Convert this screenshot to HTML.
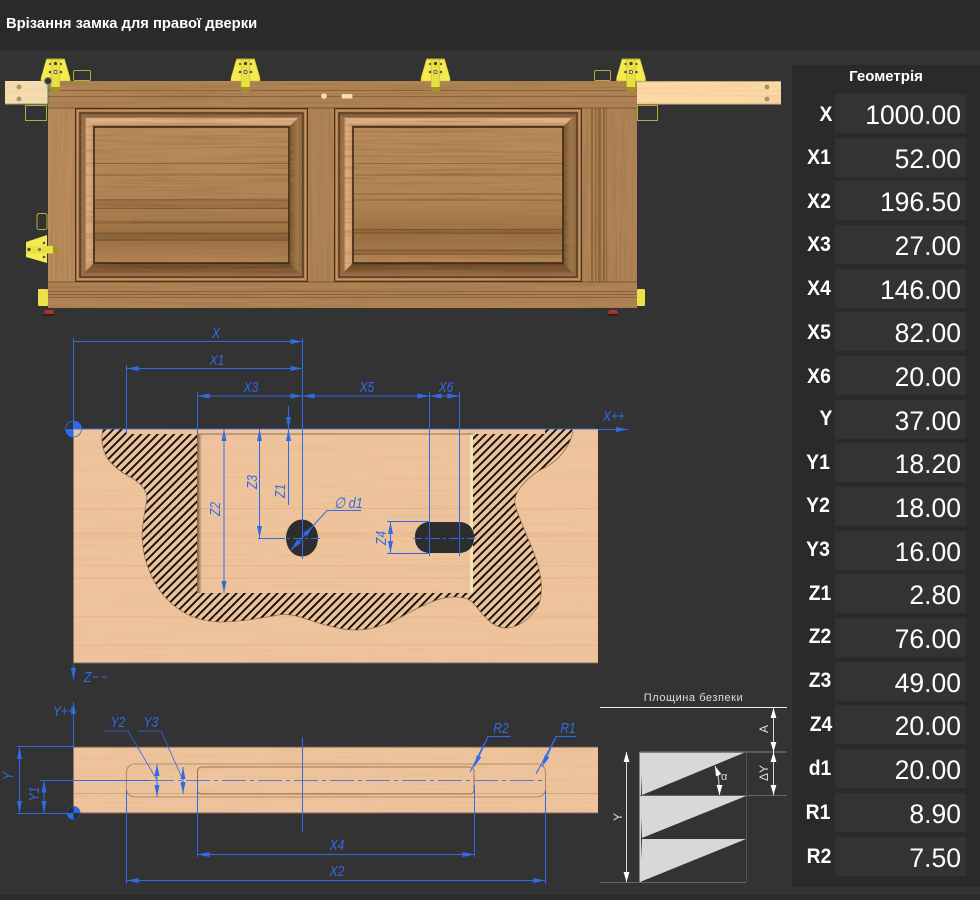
<!DOCTYPE html>
<html lang="uk">
<head>
<meta charset="utf-8">
<title>Врізання замка для правої дверки</title>
<style>
html,body{margin:0;padding:0;background:#333;}
body{width:980px;height:900px;position:relative;overflow:hidden;font-family:"Liberation Sans",sans-serif;color:#fff;}
.hd{position:absolute;left:0;top:0;width:980px;height:50px;background:#2a2a2a;}
.hd b{position:absolute;left:6px;top:15px;font-size:14.75px;line-height:18px;white-space:nowrap;}
.ft{position:absolute;left:0;top:895px;width:980px;height:5px;background:#2a2a2a;}
.pn{position:absolute;left:792px;top:65px;width:188px;height:822px;background:#2a2a2a;}
.pn h4{position:absolute;left:0;top:3px;width:188px;margin:0;text-align:center;font-size:15px;line-height:18px;}
svg{position:absolute;left:0;top:0;}
.l{position:absolute;width:60px;text-align:center;font-weight:bold;font-size:21px;line-height:24px;transform:scaleX(.92);}
.v{position:absolute;left:43px;width:126px;height:39px;padding-right:5px;background:#333;text-align:right;font-size:26.5px;line-height:42px;color:#fff;}
.d{font:italic 15px "Liberation Sans",sans-serif;fill:#2f6be8;}
.g{font:11px "Liberation Sans",sans-serif;fill:#ddd;}
</style>
</head>
<body>
<div class="hd"><b>Врізання замка для правої дверки</b></div>

<svg width="980" height="900" viewBox="0 0 980 900" xmlns="http://www.w3.org/2000/svg">
<defs>
<filter id="gh" x="0" y="0" width="100%" height="100%"><feTurbulence type="fractalNoise" baseFrequency="0.008 0.45" numOctaves="3" seed="4"/><feColorMatrix values="0 0 0 0 .33  0 0 0 0 .19  0 0 0 0 .07  2.4 0 0 0 -1.05"/></filter>
<filter id="gv" x="0" y="0" width="100%" height="100%"><feTurbulence type="fractalNoise" baseFrequency="0.45 0.008" numOctaves="3" seed="9"/><feColorMatrix values="0 0 0 0 .33  0 0 0 0 .19  0 0 0 0 .07  2.4 0 0 0 -1.05"/></filter>
<filter id="gl" x="0" y="0" width="100%" height="100%"><feTurbulence type="fractalNoise" baseFrequency="0.008 0.42" numOctaves="3" seed="12"/><feColorMatrix values="0 0 0 0 .8  0 0 0 0 .52  0 0 0 0 .3  2.4 0 0 0 -1"/></filter>
<pattern id="hat" width="5.8" height="9" patternUnits="userSpaceOnUse" patternTransform="rotate(45)">
<rect x="0" y="0" width="1.9" height="9" fill="#111"/>
</pattern>
<marker id="a" viewBox="0 0 12 5" refX="12" refY="2.5" markerWidth="12" markerHeight="5" markerUnits="userSpaceOnUse" orient="auto-start-reverse"><path d="M0 0L12 2.5L0 5z" fill="#2f6be8"/></marker>
<marker id="w" viewBox="0 0 12 7" refX="12" refY="3.5" markerWidth="10" markerHeight="6" markerUnits="userSpaceOnUse" orient="auto-start-reverse"><path d="M0 0L12 3.5L0 7z" fill="#fff"/></marker>
<linearGradient id="lb" x1="0" x2="1" y1="0" y2="0"><stop offset="0" stop-color="#8e6844"/><stop offset=".3" stop-color="#9c7248"/><stop offset=".45" stop-color="#e2b084"/><stop offset=".9" stop-color="#d29e70"/><stop offset="1" stop-color="#6e4a2a"/></linearGradient>
<linearGradient id="tb" x1="0" x2="0" y1="0" y2="1"><stop offset="0" stop-color="#7e5a38"/><stop offset=".25" stop-color="#8e6844"/><stop offset=".35" stop-color="#e6b68c"/><stop offset=".8" stop-color="#d8a678"/><stop offset="1" stop-color="#6e4a2a"/></linearGradient>
<linearGradient id="bb" x1="0" x2="0" y1="0" y2="1"><stop offset="0" stop-color="#664422"/><stop offset=".7" stop-color="#835b34"/><stop offset="1" stop-color="#a07648"/></linearGradient>
<linearGradient id="rb" x1="0" x2="1" y1="0" y2="0"><stop offset="0" stop-color="#70502c"/><stop offset=".6" stop-color="#a07648"/><stop offset="1" stop-color="#8e6642"/></linearGradient>
<linearGradient id="pd" x1="0" x2="0" y1="0" y2="1"><stop offset="0" stop-color="#ba8a5a"/><stop offset=".55" stop-color="#b38453"/><stop offset=".82" stop-color="#9a6c40"/><stop offset="1" stop-color="#b5865a"/></linearGradient>
<linearGradient id="sh" x1="0" x2="1" y1="0" y2="0"><stop offset="0" stop-color="#5a4028" stop-opacity=".8"/><stop offset="1" stop-color="#5a4028" stop-opacity="0"/></linearGradient>
<g id="hinge">
<path d="M-9 0H9L14.500 19V22H-14.500V19z" fill="#f5ea50" stroke="#c0b838" stroke-width=".5"/>
<rect x="-4.300" y="0" width="8.600" height="28" fill="#eadf42"/>
<rect x="-4.300" y="28" width="8.600" height="4.500" fill="#a09520"/>
<path d="M-4.300 0V28M4.300 0V28" stroke="#c8bd32" stroke-width=".6"/>
<circle cx="0" cy="4.500" r="1.600" fill="#3d3d30"/><circle cx="0" cy="13" r="1.600" fill="#e8e8e0" stroke="#333" stroke-width=".7"/>
<circle cx="-5.500" cy="13" r="1.300" fill="#55553c"/><circle cx="5.500" cy="13" r="1.300" fill="#55553c"/>
<circle cx="-5.500" cy="5" r="1.100" fill="#55553c"/><circle cx="5.500" cy="5" r="1.100" fill="#55553c"/>
<rect x="-9" y="-.6" width="18" height="1" fill="#a09a30"/>
</g>
</defs>

<!-- planks -->
<rect x="5" y="81" width="44" height="23" fill="#f5ddb0"/>
<rect x="5" y="81" width="44" height="23" filter="url(#gl)" opacity=".4"/>
<rect x="5" y="103.500" width="44" height="1" fill="#a89878"/>
<circle cx="19" cy="87" r="2.500" fill="#a49a68"/><circle cx="19" cy="99" r="2.500" fill="#a49a68"/>
<rect x="637" y="81" width="144" height="23.500" fill="#fcd8a2"/>
<rect x="637" y="81" width="144" height="23.500" filter="url(#gl)" opacity=".5"/>
<rect x="637" y="103.800" width="144" height="1" fill="#9c8868"/><rect x="637" y="81" width="144" height=".8" fill="#b09a78"/>
<circle cx="767" cy="87" r="2.400" fill="#9c9468"/><circle cx="767" cy="99" r="2.400" fill="#9c9468"/>

<!-- outlines -->
<g fill="none" stroke="#b5ae34" stroke-width="1">
<rect x="73.500" y="70.500" width="17" height="10" rx="1.500"/>
<rect x="594.500" y="70.500" width="16" height="10" rx="1.500"/>
<rect x="25.500" y="105.500" width="21" height="15"/>
<rect x="637.500" y="105.500" width="20" height="15"/>
<rect x="37" y="213.500" width="10" height="16" rx="2"/>
</g>

<!-- door -->
<rect x="48" y="81" width="589" height="227" fill="#b08254"/>
<rect x="48" y="81" width="589" height="27" filter="url(#gh)"/>
<rect x="48" y="282" width="589" height="26" filter="url(#gh)"/>
<g stroke="#6a4526" stroke-width="1" opacity=".5">
<path d="M48 96.500H637M48 90.500H637M48 294.500H637M48 297.500H637M48 291.500H637"/>
</g>
<rect x="48" y="108" width="27" height="174" fill="#b98a5a"/>
<rect x="48" y="108" width="27" height="174" filter="url(#gv)" opacity=".6"/>
<rect x="308" y="108" width="26" height="174" fill="#b08256"/>
<rect x="308" y="108" width="26" height="174" filter="url(#gv)"/>
<rect x="582" y="108" width="55" height="174" fill="#b08256"/>
<rect x="582" y="108" width="55" height="174" filter="url(#gv)"/>
<g fill="#6a4526" opacity=".45"><rect x="591" y="108" width="2" height="174"/><rect x="595" y="108" width="1.500" height="174"/><rect x="598" y="108" width="3" height="174"/><rect x="603" y="108" width="2" height="174"/><rect x="606" y="108" width="1" height="174"/></g>
<path d="M48 108H637M48 282H637" stroke="#7c5530" stroke-width="1"/>

<!-- panel 1 -->
<rect x="75.500" y="108.500" width="232" height="173" fill="#9a7046" stroke="#4e3319" stroke-width="1"/>
<rect x="77.800" y="110.800" width="227.400" height="168.400" fill="none" stroke="#cf9e70" stroke-width="1.200"/>
<rect x="80" y="113" width="223" height="164" fill="#8a6240" stroke="#4a2f16" stroke-width="1.200"/>
<polygon points="81,114 302,114 289,127 94,127" fill="url(#tb)"/>
<polygon points="81,114 94,127 94,263 81,276" fill="url(#lb)"/>
<polygon points="81,276 94,263 289,263 302,276" fill="url(#bb)"/>
<polygon points="302,114 289,127 289,263 302,276" fill="url(#rb)"/>
<rect x="81" y="114" width="221" height="162" filter="url(#gh)" opacity=".55"/>
<rect x="94" y="127" width="196" height="136" fill="url(#pd)"/>
<rect x="94" y="127" width="196" height="136" filter="url(#gh)"/>
<g fill="#5e3d1f" opacity=".22"><rect x="94" y="199" width="196" height="10"/><rect x="94" y="221" width="196" height="3"/><rect x="94" y="232" width="196" height="9"/></g>
<g stroke="#5e3d1f" opacity=".42"><path d="M94 163.500H290M94 175H290M94 200H290M94 208.500H290M130 222H290M94 233.500H290M94 240H290" fill="none"/></g>
<rect x="94" y="127" width="195" height="136" fill="none" stroke="#3a2410" stroke-width="1.500"/>

<!-- panel 2 -->
<rect x="334.500" y="108.500" width="247" height="173" fill="#9a7046" stroke="#4e3319" stroke-width="1"/>
<rect x="336.800" y="110.800" width="242.400" height="168.400" fill="none" stroke="#cf9e70" stroke-width="1.200"/>
<rect x="339" y="113" width="238" height="164" fill="#8a6240" stroke="#4a2f16" stroke-width="1.200"/>
<polygon points="340,114 576,114 563,127 353,127" fill="url(#tb)"/>
<polygon points="340,114 353,127 353,263 340,276" fill="url(#lb)"/>
<polygon points="340,276 353,263 563,263 576,276" fill="url(#bb)"/>
<polygon points="576,114 563,127 563,263 576,276" fill="url(#rb)"/>
<rect x="340" y="114" width="236" height="162" filter="url(#gh)" opacity=".55"/>
<rect x="353" y="127" width="210" height="136" fill="url(#pd)"/>
<rect x="353" y="127" width="210" height="136" filter="url(#gh)"/>
<g fill="#5e3d1f" opacity=".22"><rect x="353" y="229" width="210" height="5"/><rect x="353" y="249" width="210" height="6"/></g>
<g stroke="#5e3d1f" opacity=".42"><path d="M353 163.500H563M353 175H563M353 194H563M353 200H563M353 229.500H563M353 233H563M353 250.500H563M353 254H563" fill="none"/></g>
<rect x="353" y="127" width="210" height="136" fill="none" stroke="#3a2410" stroke-width="1.500"/>

<circle cx="324" cy="96" r="2.800" fill="#f3dfb0"/><rect x="341.500" y="94" width="11" height="4.500" rx="1.500" fill="#f3dfb0"/>
<path d="M48 81V105M48 81H72" stroke="#2f8a4a" stroke-width="1" fill="none"/>

<use href="#hinge" x="55.500" y="59"/>
<use href="#hinge" x="245.500" y="59"/>
<use href="#hinge" x="435.500" y="59"/>
<use href="#hinge" x="631" y="59"/>
<circle cx="48" cy="81" r="3.500" fill="#2a3a30" stroke="#888" stroke-width="1"/>
<path d="M47 235V263L26 257V242z" fill="#f5ea50"/>
<rect x="26" y="246" width="27" height="7.500" fill="#eadf42"/><rect x="53" y="246" width="5" height="7.500" fill="#a09520"/>
<circle cx="29" cy="249.500" r="1.600" fill="#444"/><circle cx="39.500" cy="249.500" r="1.600" fill="#778"/>
<circle cx="44" cy="243" r="1.300" fill="#555"/><circle cx="44" cy="257" r="1.300" fill="#555"/>
<rect x="38" y="289" width="10" height="17" rx="1" fill="#ede04a"/>
<rect x="637" y="289" width="8" height="17" rx="1" fill="#ede04a"/>
<path d="M45 310h8l1 4h-10z" fill="#a8323a"/><rect x="43" y="314" width="11" height="1.500" fill="#3a1010"/>
<path d="M609 310h8l1 4h-10z" fill="#a8323a"/><rect x="607" y="314" width="11" height="1.500" fill="#3a1010"/>

<!-- main wood -->
<rect x="73.500" y="429" width="524.500" height="234" fill="#efc39c"/>
<rect x="73.500" y="429" width="524.500" height="234" filter="url(#gl)" opacity=".8"/>
<g stroke="#cf9a60" stroke-width="1" opacity=".3"><path d="M74 508.500H598M74 533.500H598M74 536H598M74 566H598M74 578H598M74 617H598M74 645H598"/></g>
<rect x="73.500" y="662.500" width="524.500" height="1" fill="#7a6a58"/>
<rect x="197" y="434" width="5" height="159" fill="url(#sh)"/>
<rect x="470" y="434" width="3" height="159" fill="#f7e3b2"/>
<path d="M197 434H473" stroke="#8a7560" stroke-width="1"/>
<path d="M103 429C101 437 101 446 107 458C113 466 122 473 132 478C141 484 147 490 147 499C145 510 142 525 142 537C143 555 147 568 155 583C162 596 172 605 183 612C195 619 207 622 222 622C240 622 262 618 278 615C296 612 312 623 330 626C343 630 356 631 368 629C384 626 397 620 410 612C426 604 440 597 453 597C463 597 469 598 474 604C482 613 490 627 505 628C520 628 532 617 539 604C543 593 542 580 538 565C533 548 525 532 520 519C516 508 513 503 516 495C521 484 533 473 546 467C559 460 570 446 573 432L572 429H545L545 434H473V593H197V434H126V429z" fill="url(#hat)"/>
<path d="M103 429C101 437 101 446 107 458C113 466 122 473 132 478C141 484 147 490 147 499C145 510 142 525 142 537C143 555 147 568 155 583C162 596 172 605 183 612C195 619 207 622 222 622C240 622 262 618 278 615C296 612 312 623 330 626C343 630 356 631 368 629C384 626 397 620 410 612C426 604 440 597 453 597C463 597 469 598 474 604C482 613 490 627 505 628C520 628 532 617 539 604C543 593 542 580 538 565C533 548 525 532 520 519C516 508 513 503 516 495C521 484 533 473 546 467C559 460 570 446 573 432" fill="none" stroke="#8a6a48" stroke-width=".7"/>
<ellipse cx="302" cy="538" rx="16" ry="18.500" fill="#2d2d2d"/>
<rect x="415" y="522" width="59" height="31" rx="14" fill="#2d2d2d"/>

<!-- drawing dims top -->
<g stroke="#2f6be8" stroke-width="1" fill="none">
<path d="M73.500 338V429M126.500 365V434M197.500 392V434M302.500 338V559M429.500 392V556M459.500 392V556"/>
<path d="M73.500 341.500H302.500" marker-end="url(#a)"/>
<path d="M126.500 368.500H302.500" marker-start="url(#a)" marker-end="url(#a)"/>
<path d="M197.500 396H302.500" marker-start="url(#a)" marker-end="url(#a)"/>
<path d="M302.500 396H429.500" marker-start="url(#a)" marker-end="url(#a)"/>
<path d="M429.500 396H459.500" marker-start="url(#a)" marker-end="url(#a)"/>
<path d="M73.500 429H598" stroke-opacity=".8"/>
<path d="M598 429.500H628" marker-end="url(#a)"/>
<path d="M288.500 406V429" marker-end="url(#a)"/>
<path d="M288.500 505V429" marker-end="url(#a)"/>
<path d="M259.500 429V538" marker-start="url(#a)" marker-end="url(#a)"/>
<path d="M224 429V593" marker-start="url(#a)" marker-end="url(#a)"/>
<path d="M258 538.500H285"/>
<path d="M390.500 522V553" marker-start="url(#a)" marker-end="url(#a)"/>
<path d="M387 521.500H430M387 553.500H430"/>
<path d="M291 550L313 526" marker-start="url(#a)"/>
<path d="M291 550L313 526" marker-end="url(#a)"/>
<path d="M313 526L327 510.500H361"/>
<path d="M275 538.500H322M413 538.500H477" stroke-dasharray="9 3 3 3"/>
</g>
<text class="d" transform="translate(216,338) scale(.8,1)" text-anchor="middle">X</text>
<text class="d" transform="translate(217,365) scale(.8,1)" text-anchor="middle">X1</text>
<text class="d" transform="translate(251,392) scale(.8,1)" text-anchor="middle">X3</text>
<text class="d" transform="translate(367,392) scale(.8,1)" text-anchor="middle">X5</text>
<text class="d" transform="translate(446,392) scale(.8,1)" text-anchor="middle">X6</text>
<text class="d" transform="translate(603,421) scale(.8,1)">X++</text>
<text class="d" transform="translate(285,491) rotate(-90) scale(.8,1)" text-anchor="middle">Z1</text>
<text class="d" transform="translate(257,482) rotate(-90) scale(.8,1)" text-anchor="middle">Z3</text>
<text class="d" transform="translate(220,509) rotate(-90) scale(.8,1)" text-anchor="middle">Z2</text>
<text class="d" transform="translate(386,538) rotate(-90) scale(.8,1)" text-anchor="middle">Z4</text>
<text class="d" transform="translate(334,508) scale(.85,1)">∅ d1</text>
<circle cx="73.500" cy="429" r="8" fill="none" stroke="#2f6be8" stroke-width=".8"/>
<path d="M73.500 421A8 8 0 0 1 81.500 429H73.500zM73.500 429H65.500A8 8 0 0 0 73.500 437z" fill="#2f6be8"/>

<!-- bottom view -->
<rect x="73.500" y="747" width="524.500" height="66" fill="#efc39c"/>
<rect x="73.500" y="747" width="524.500" height="66" filter="url(#gl)" opacity=".85"/>
<path d="M74 793.500H598" stroke="#a8784a" stroke-width="1" opacity=".4"/>
<path d="M73.500 747H598" stroke="#6a5a48" stroke-width="1"/>
<path d="M73.500 813H598" stroke="#7a6a58" stroke-width="1"/>
<rect x="126.500" y="764" width="419" height="33" rx="8" fill="none" stroke="#9a7e64" stroke-width=".8"/>
<rect x="197.500" y="767" width="276.500" height="27" rx="4" fill="none" stroke="#7e6248" stroke-width=".8"/>
<g stroke="#2f6be8" stroke-width="1" fill="none">
<path d="M73.500 680V665" marker-start="url(#a)"/>
<path d="M73.500 747V702" marker-end="url(#a)"/>
<path d="M17 746.500H73.500M17 813.500H73.500M40 780.500H150"/>
<path d="M19.500 747V813" marker-start="url(#a)" marker-end="url(#a)"/>
<path d="M44 780.500V813" marker-start="url(#a)" marker-end="url(#a)"/>
<path d="M150 780.500H545" stroke-dasharray="24 4 4 4" stroke-opacity=".8"/>
<path d="M157 764V797" marker-start="url(#a)" marker-end="url(#a)"/>
<path d="M183 767V794" marker-start="url(#a)" marker-end="url(#a)"/>
<path d="M104 731H128L157 780M138 731H161L183 780" stroke-width=".8"/>
<path d="M302.500 737V832"/>
<path d="M197.500 780V857M474.500 785V857M126.500 790V884M545.500 790V884"/>
<path d="M197.500 854.500H474.500" marker-start="url(#a)" marker-end="url(#a)"/>
<path d="M126.500 880.500H545.500" marker-start="url(#a)" marker-end="url(#a)"/>
<path d="M511 736.500H488L470 772M576 736.500H556L536 774"/>
<path d="M488 737L474 767" marker-end="url(#a)"/>
<path d="M556 737L542 767" marker-end="url(#a)"/>
</g>
<text class="d" transform="translate(84,682) scale(.8,1)">Z</text><path d="M93 677H98M101 677H107" stroke="#2f6be8"/>
<text class="d" transform="translate(53,716) scale(.8,1)">Y++</text>
<text class="d" transform="translate(118,727) scale(.8,1)" text-anchor="middle">Y2</text>
<text class="d" transform="translate(151,727) scale(.8,1)" text-anchor="middle">Y3</text>
<text class="d" transform="translate(501,733) scale(.8,1)" text-anchor="middle">R2</text>
<text class="d" transform="translate(568,733) scale(.8,1)" text-anchor="middle">R1</text>
<text class="d" transform="translate(337,850) scale(.8,1)" text-anchor="middle">X4</text>
<text class="d" transform="translate(337,876) scale(.8,1)" text-anchor="middle">X2</text>
<text class="d" transform="translate(13,776) rotate(-90) scale(.8,1)" text-anchor="middle">Y</text>
<text class="d" transform="translate(39,794) rotate(-90) scale(.8,1)" text-anchor="middle">Y1</text>
<circle cx="73.500" cy="813" r="6.500" fill="#2c2c2c" stroke="#1e4fa8" stroke-width=".8"/>
<path d="M73.500 806.500A6.500 6.500 0 0 1 80 813H73.500zM73.500 813H67A6.500 6.500 0 0 0 73.500 819.500z" fill="#2f6be8"/>

<!-- right diagram -->
<text class="g" x="693.500" y="701" text-anchor="middle" letter-spacing=".55">Площина безпеки</text>
<path d="M600 707.500H787" stroke="#eee" stroke-width="1"/>
<g fill="#d8d8d8">
<polygon points="640,752 746,752 642,795"/>
<polygon points="640,796 746,796 642,838"/>
<polygon points="642,839 746,839 640,882"/>
<rect x="639.500" y="752" width="1.500" height="130"/>
</g>
<path d="M640 752H787" stroke="#666" stroke-width="1.500"/>
<path d="M640 795.500H787" stroke="#666" stroke-width="1"/>
<path d="M600 882.500H746" stroke="#666" stroke-width="1"/>
<path d="M746.500 752V882" stroke="#555" stroke-width="1"/>
<g stroke="#ddd" stroke-width="1" fill="none">
<path d="M626.500 752V882" marker-start="url(#w)" marker-end="url(#w)"/>
<path d="M773.500 708V752" marker-start="url(#w)" marker-end="url(#w)"/>
<path d="M773.500 752V795" marker-start="url(#w)" marker-end="url(#w)"/>
<path d="M719 785Q719 776 715 766" marker-end="url(#w)"/>
<path d="M719.500 788V795" marker-end="url(#w)"/>
</g>
<text class="g" x="721" y="780">α</text>
<text class="g" transform="translate(768,729) rotate(-90)" text-anchor="middle" style="font-size:12px">A</text>
<text class="g" transform="translate(768,773) rotate(-90)" text-anchor="middle" style="font-size:12px">ΔY</text>
<text class="g" transform="translate(622,817) rotate(-90)" text-anchor="middle" style="font-size:12px">Y</text>
</svg>

<div class="pn">
<h4>Геометрія</h4>
<div class="l" style="left:4px;top:38px">X</div><div class="v" style="top:29px">1000.00</div>
<div class="l" style="left:-3px;top:81px">X1</div><div class="v" style="top:73px">52.00</div>
<div class="l" style="left:-3px;top:125px">X2</div><div class="v" style="top:116px">196.50</div>
<div class="l" style="left:-3px;top:168px">X3</div><div class="v" style="top:160px">27.00</div>
<div class="l" style="left:-3px;top:212px">X4</div><div class="v" style="top:204px">146.00</div>
<div class="l" style="left:-3px;top:256px">X5</div><div class="v" style="top:247px">82.00</div>
<div class="l" style="left:-3px;top:300px">X6</div><div class="v" style="top:291px">20.00</div>
<div class="l" style="left:4px;top:342px">Y</div><div class="v" style="top:335px">37.00</div>
<div class="l" style="left:-4px;top:386px">Y1</div><div class="v" style="top:378px">18.20</div>
<div class="l" style="left:-4px;top:429px">Y2</div><div class="v" style="top:422px">18.00</div>
<div class="l" style="left:-4px;top:473px">Y3</div><div class="v" style="top:466px">16.00</div>
<div class="l" style="left:-2px;top:517px">Z1</div><div class="v" style="top:509px">2.80</div>
<div class="l" style="left:-2px;top:560px">Z2</div><div class="v" style="top:553px">76.00</div>
<div class="l" style="left:-2px;top:604px">Z3</div><div class="v" style="top:597px">49.00</div>
<div class="l" style="left:-1px;top:648px">Z4</div><div class="v" style="top:640px">20.00</div>
<div class="l" style="left:-2px;top:692px">d1</div><div class="v" style="top:684px">20.00</div>
<div class="l" style="left:-4px;top:736px">R1</div><div class="v" style="top:728px">8.90</div>
<div class="l" style="left:-3px;top:780px">R2</div><div class="v" style="top:772px">7.50</div>
</div>
<div class="ft"></div>
</body>
</html>
